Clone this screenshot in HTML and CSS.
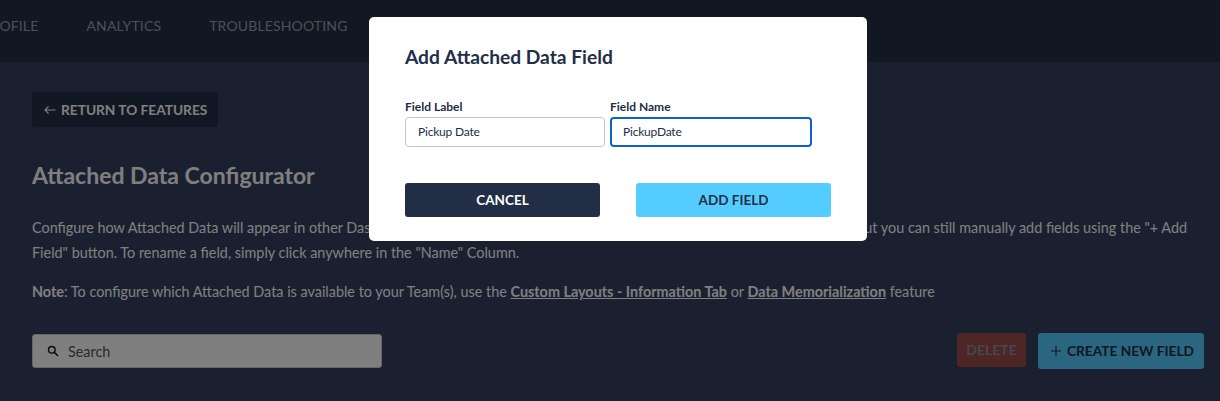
FILE: index.html
```html
<!DOCTYPE html>
<html lang="en">
<head>
<meta charset="utf-8">
<title>Attached Data Configurator</title>
<link rel="stylesheet" href="styles.css">
</head>
<body>
<div class="page">
  <nav class="nav">
    <a class="nav-item">PROFILE</a>
    <a class="nav-item">ANALYTICS</a>
    <a class="nav-item">TROUBLESHOOTING</a>
  </nav>
  <main class="main">
    <button class="back-btn">
      <svg class="back-icon" viewBox="0 0 12 10" width="12" height="10"><path d="M11.5 5H1M4.5 1.5L1 5l3.500 3.500" fill="none" stroke="currentColor" stroke-width="1.1"/></svg>
      RETURN TO FEATURES
    </button>
    <h1 class="title">Attached Data Configurator</h1>
    <p class="desc">Configure how Attached Data will appear in other Dashboard features. Fields here are produced automatically by your integrations, but you can still manually add fields using the "+ Add Field" button. To rename a field, simply click anywhere in the "Name" Column.</p>
    <p class="note"><strong>Note</strong>: To configure which Attached Data is available to your Team(s), use the <a class="link">Custom Layouts - Information Tab</a> or <a class="link">Data Memorialization</a> feature</p>
    <div class="toolbar">
      <div class="search">
        <svg class="search-icon" viewBox="0 0 12 12" width="12" height="12"><circle cx="4.800" cy="4.800" r="3.300" fill="none" stroke="#111" stroke-width="1.400"/><path d="M7.300 7.300L11 11" stroke="#111" stroke-width="1.500"/></svg>
        <span class="search-text">Search</span>
      </div>
      <div class="actions">
        <button class="delete-btn">DELETE</button>
        <button class="create-btn">
          <svg viewBox="0 0 10 10" width="10" height="10"><path d="M5 0v10M0 5h10" stroke="currentColor" stroke-width="1.100"/></svg>
          CREATE NEW FIELD
        </button>
      </div>
    </div>
  </main>
</div>
<div class="overlay"></div>
<div class="modal">
  <h2 class="modal-title">Add Attached Data Field</h2>
  <div class="fields">
    <div class="field">
      <label class="field-label">Field Label</label>
      <div class="input">Pickup Date</div>
    </div>
    <div class="field">
      <label class="field-label">Field Name</label>
      <div class="input input-focus">PickupDate</div>
    </div>
  </div>
  <div class="modal-actions">
    <button class="cancel-btn">CANCEL</button>
    <button class="add-btn">ADD FIELD</button>
  </div>
</div>
</body>
</html>
```
FILE: styles.css
```css
* { box-sizing: border-box; }
html, body { margin: 0; height: 100%; }
body {
  width: 1220px;
  height: 401px;
  overflow: hidden;
  background: #344060;
  color: #fff;
  font-family: "Lato", "Liberation Sans", sans-serif;
}
button { font-family: inherit; border: 0; }
.page { height: 401px; overflow: hidden; }
.nav {
  height: 62px;
  background: #222e46;
  display: flex;
  align-items: center;
  gap: 48px;
  margin-left: -18px;
  padding-bottom: 12px;
}
.nav-item { font-size: 14px; color: #9aa0ad; letter-spacing: 0.15px; }
.main { padding: 30px 16px 0 32px; }
.back-btn {
  display: flex;
  align-items: center;
  gap: 5px;
  height: 35px;
  width: 186px;
  padding: 0 0 0 12px;
  background: #222e46;
  color: #fff;
  font-size: 13.7px;
  font-weight: 700;
  border-radius: 3px;
}
.title { margin: 33px 0 0; font-size: 23px; line-height: 30px; font-weight: 700; }
.desc { margin: 25px 0 0; font-size: 14.4px; line-height: 25px; }
.note { margin: 14px 0 0; font-size: 14.4px; line-height: 25px; }
.link { font-weight: 700; text-decoration: underline; }
.toolbar { display: flex; justify-content: space-between; align-items: flex-start; margin-top: 29px; }
.search {
  display: flex;
  align-items: center;
  gap: 9px;
  width: 350px;
  height: 34px;
  margin-top: 1px;
  padding-left: 14px;
  background: #fff;
  border: 1px solid #ccc;
  border-radius: 3px;
}
.search-text { font-size: 14.4px; color: #555; }
.actions { display: flex; gap: 12px; align-items: flex-start; }
.delete-btn {
  width: 69px;
  height: 34px;
  padding: 0 0 2px;
  background: #9c4c4c;
  color: #8a8f99;
  font-size: 14px;
  font-weight: 700;
  border-radius: 3px;
}
.create-btn {
  display: flex;
  align-items: center;
  gap: 6px;
  width: 166px;
  height: 36px;
  padding: 0 0 1px 13px;
  background: #55ccff;
  color: #222e46;
  font-size: 13.7px;
  font-weight: 700;
  border-radius: 3px;
}
.overlay { position: fixed; inset: 0; background: rgba(0, 0, 0, 0.5); }
.modal {
  position: fixed;
  left: 369px;
  top: 17px;
  width: 498px;
  height: 224px;
  padding: 28px 36px 0;
  background: #fff;
  border-radius: 5px;
  color: #222e46;
}
.modal-title { margin: 0; font-size: 19.2px; line-height: 24px; font-weight: 700; }
.fields { display: flex; gap: 5px; margin-top: 30px; }
.field { display: flex; flex-direction: column; }
.field-label { font-size: 12px; line-height: 16px; font-weight: 700; }
.input {
  width: 200px;
  height: 30px;
  margin-top: 2px;
  padding: 0 0 2px 12px;
  display: flex;
  align-items: center;
  border: 1px solid #c0c6d8;
  border-radius: 4px;
  font-size: 12px;
  letter-spacing: -0.2px;
}
.input-focus { width: 202px; padding-left: 11px; border: 2px solid #0c62c8; border-radius: 4px; }
.modal-actions { display: flex; gap: 36px; margin-top: 36px; }
.cancel-btn, .add-btn {
  width: 195px;
  height: 34px;
  font-size: 13.5px;
  font-weight: 700;
  border-radius: 3px;
}
.cancel-btn { background: #222e46; color: #fff; }
.add-btn { background: #55ccff; color: #222e46; }
```
